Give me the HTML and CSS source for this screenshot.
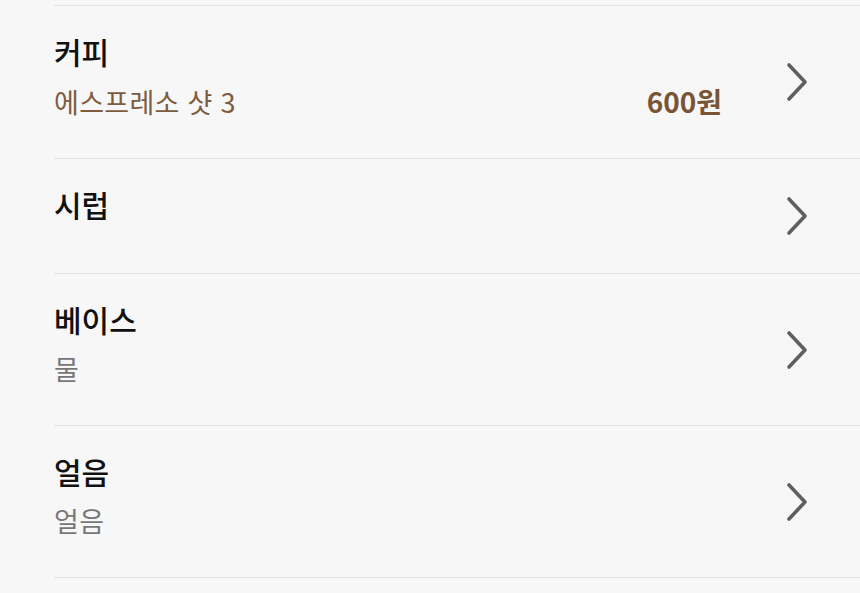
FILE: index.html
```html
<!DOCTYPE html>
<html lang="ko">
<head>
<meta charset="utf-8">
<link rel="stylesheet" href="styles.css">
</head>
<body>
<ul class="list">
  <li class="row">
    <div class="info">
      <div class="title">커피</div>
      <div class="subline">
        <span class="sub sub-brown">에스프레소 샷 3</span>
        <span class="price">600원</span>
      </div>
    </div>
    <svg class="chev" viewBox="0 0 24 40" width="24" height="40"><path d="M4 3 L20 20 L4 37" fill="none" stroke="#5f5f5f" stroke-width="3.6" stroke-linecap="round" stroke-linejoin="round"/></svg>
  </li>
  <li class="row">
    <div class="info">
      <div class="title">시럽</div>
    </div>
    <svg class="chev" viewBox="0 0 24 40" width="24" height="40"><path d="M4 3 L20 20 L4 37" fill="none" stroke="#5f5f5f" stroke-width="3.6" stroke-linecap="round" stroke-linejoin="round"/></svg>
  </li>
  <li class="row">
    <div class="info">
      <div class="title">베이스</div>
      <div class="subline"><span class="sub">물</span></div>
    </div>
    <svg class="chev" viewBox="0 0 24 40" width="24" height="40"><path d="M4 3 L20 20 L4 37" fill="none" stroke="#5f5f5f" stroke-width="3.6" stroke-linecap="round" stroke-linejoin="round"/></svg>
  </li>
  <li class="row">
    <div class="info">
      <div class="title">얼음</div>
      <div class="subline"><span class="sub">얼음</span></div>
    </div>
    <svg class="chev" viewBox="0 0 24 40" width="24" height="40"><path d="M4 3 L20 20 L4 37" fill="none" stroke="#5f5f5f" stroke-width="3.6" stroke-linecap="round" stroke-linejoin="round"/></svg>
  </li>
</ul>
</body>
</html>
```
FILE: styles.css
```css
html, body {
  margin: 0;
  padding: 0;
  background: #f7f7f7;
  font-family: "Noto Sans CJK KR", "Noto Sans", sans-serif;
}
.list {
  list-style: none;
  margin: 5px 0 0 54px;
  padding: 0;
  border-top: 1px solid #e3e3e3;
}
.row {
  display: flex;
  align-items: center;
  min-height: 114px;
  padding-right: 51px;
  border-bottom: 1px solid #e3e3e3;
}
.info {
  flex: 1;
  align-self: flex-start;
  margin-right: 63px;
  padding: 25px 0 37px;
}
.title {
  font-size: 30px;
  line-height: 40px;
  font-weight: 500;
  color: #111;
}
.subline {
  display: flex;
  justify-content: space-between;
  align-items: baseline;
  margin-top: 11px;
  line-height: 38px;
}
.sub {
  font-size: 27px;
  letter-spacing: 0.3px;
  color: #777;
}
.sub-brown {
  color: #7d5b3d;
}
.price {
  font-size: 28px;
  font-weight: 700;
  color: #7a5535;
}
.chev {
  display: block;
  flex: none;
}
```
